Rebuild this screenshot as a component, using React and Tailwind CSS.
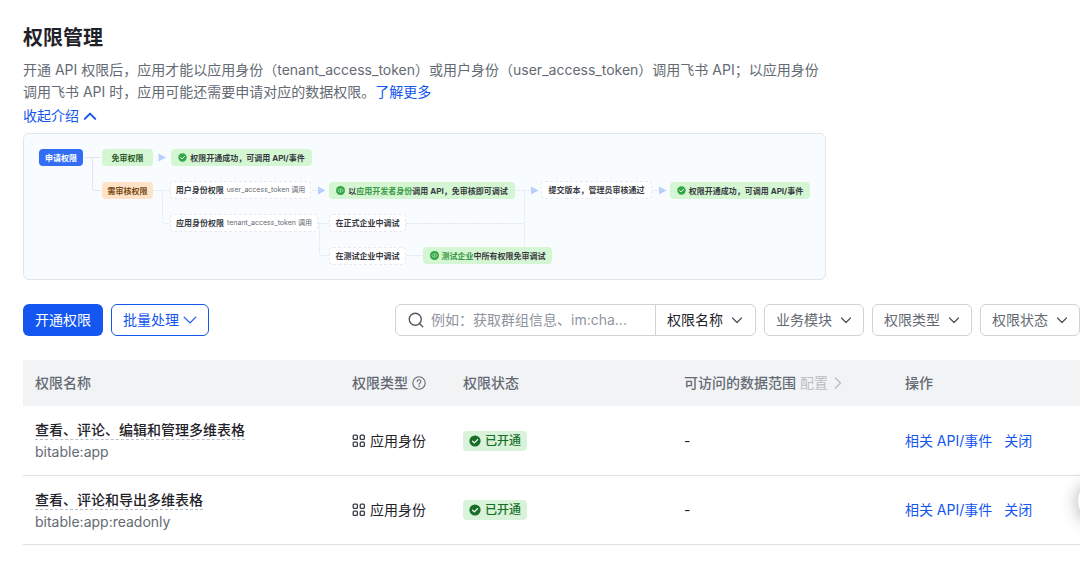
import React, { useState } from 'react';
import { Search } from 'lucide-react';

let permissions = [
  {
    scope: 'bitable:app',
    name: '查看、评论、编辑和管理多维表格',
    type: '应用身份',
    status: '已开通',
    range: '-',
  },
  {
    scope: 'bitable:app:readonly',
    name: '查看、评论和导出多维表格',
    type: '应用身份',
    status: '已开通',
    range: '-',
  },
];

let filters = ['业务模块', '权限类型', '权限状态'];

function Chevron({ className, d = 'M1.500 4L6 8.500L10.500 4', strokeWidth = 1.3 }) {
  return (
    <svg
      viewBox="0 0 12 12"
      className={className}
      fill="none"
      stroke="currentColor"
      strokeWidth={strokeWidth}
      strokeLinecap="round"
      strokeLinejoin="round"
      aria-hidden="true"
    >
      <path d={d} />
    </svg>
  );
}

function CheckIcon({ className }) {
  return (
    <svg viewBox="0 0 12 12" className={className} aria-hidden="true">
      <circle cx="6" cy="6" r="5.6" fill="currentColor" />
      <path
        d="M3.5 6.1L5.3 7.9L8.6 4.6"
        fill="none"
        stroke="#fff"
        strokeWidth={1.3}
        strokeLinecap="round"
        strokeLinejoin="round"
      />
    </svg>
  );
}

function CodeIcon({ className }) {
  return (
    <svg viewBox="0 0 12 12" className={className} aria-hidden="true">
      <circle cx="6" cy="6" r="6" fill="currentColor" />
      <path
        d="M4.2 4L2.6 6L4.2 8M7.8 4L9.4 6L7.8 8M6.4 3.6L5.6 8.4"
        fill="none"
        stroke="#d9f5d6"
        strokeWidth={0.9}
        strokeLinecap="round"
        strokeLinejoin="round"
      />
    </svg>
  );
}

function HelpIcon() {
  return (
    <svg
      viewBox="0 0 14 14"
      className="w-3.5 h-3.5"
      fill="none"
      stroke="currentColor"
      strokeWidth={1.1}
      strokeLinecap="round"
      aria-hidden="true"
    >
      <circle cx="7" cy="7" r="6.2" />
      <path d="M5.2 5.6a1.8 1.8 0 1 1 2.6 1.6c-.6.3-.8.6-.8 1.1" />
      <circle cx="7" cy="10.1" r="0.3" fill="currentColor" strokeWidth={0.7} />
    </svg>
  );
}

function AppsIcon() {
  return (
    <svg
      viewBox="0 0 14 14"
      className="w-3.5 h-3.5 text-[#373c43]"
      fill="none"
      stroke="currentColor"
      strokeWidth={1.3}
      aria-hidden="true"
    >
      <rect x="1.2" y="1.2" width="4.2" height="4.2" rx="1" />
      <rect x="8.2" y="1.2" width="4.2" height="4.2" rx="1" />
      <rect x="1.2" y="8.2" width="4.2" height="4.2" rx="1" />
      <rect x="8.2" y="8.2" width="4.2" height="4.2" rx="1" />
    </svg>
  );
}

function Node({ className, children }) {
  return (
    <div
      className={`absolute flex items-center justify-center whitespace-nowrap rounded-sm ${className}`}
    >
      {children}
    </div>
  );
}

function FlowLines() {
  return (
    <svg
      className="absolute left-0 top-0"
      width="800"
      height="145"
      fill="none"
      stroke="#e1e6f5"
      aria-hidden="true"
    >
      <path d="M60 23.5H77M68.5 23.5V54q0 2.500 2.500 2.500H77" />
      <path
        d="M129 56.500H146M138.500 56.500V87q0 2.500 2.500 2.500H146M288 56.500H294M294 89.500H305M295.500 89.500V119q0 2.500 2.500 2.500H305M382 89.500H500M382 121.500H399M500.500 56.500V113M491 56.500H507M628 56.500H635"
        strokeDasharray="2 1"
      />
      <g fill="#bacefd" stroke="none">
        <path d="M134.500 19.500L142 23.500L134.500 27.500Z" />
        <path d="M294 52.500L301.500 56.500L294 60.500Z" />
        <path d="M507 52.500L514.500 56.500L507 60.500Z" />
        <path d="M635 52.500L642.500 56.500L635 60.500Z" />
      </g>
    </svg>
  );
}

function FlowDiagram() {
  return (
    <div className="relative mt-1.5 h-[147px] max-w-[803px] rounded-md border border-[#e2e6ea] bg-[#f8fcff] overflow-hidden text-[8px] leading-3 font-bold text-[#373c43]">
      <FlowLines />
      <Node className="left-[15px] top-[15px] w-11 h-[17px] bg-[#336df4] text-white">
        申请权限
      </Node>
      <Node className="left-[78px] top-[15px] w-[51px] h-[17px] bg-[#d5f6d2] text-[#2b5a29]">
        免审权限
      </Node>
      <Node className="left-[147px] top-[15px] w-[141px] h-[17px] bg-[#d5f6d2] gap-[3px]">
        <CheckIcon className="w-[9px] h-[9px] text-[#32a645]" />
        <span>权限开通成功，可调用 API/事件</span>
      </Node>
      <Node className="left-[78px] top-[48px] w-[51px] h-[17px] bg-[#fee3c6] text-[#7a4a16]">
        需审核权限
      </Node>
      <Node className="left-[146px] top-[47px] w-[141px] h-[18px] border border-dashed border-[#e6e9f3] bg-white gap-[3px]">
        <span>用户身份权限</span>
        <span className="text-[7px] font-normal text-[#646a73]">
          user_access_token 调用
        </span>
      </Node>
      <Node className="left-[146px] top-[80px] w-[148px] h-[18px] border border-dashed border-[#e6e9f3] bg-white gap-[3px]">
        <span>应用身份权限</span>
        <span className="text-[7px] font-normal text-[#646a73]">
          tenant_access_token 调用
        </span>
      </Node>
      <Node className="left-[305px] top-[48px] w-[186px] h-[17px] bg-[#d5f6d2] gap-[3px]">
        <CodeIcon className="w-[9px] h-[9px] text-[#32a645]" />
        <span>
          以<span className="text-[#3a9a48]">应用开发者身份</span>调用
          API，免审核即可调试
        </span>
      </Node>
      <Node className="left-[305px] top-[80px] w-[77px] h-[18px] border border-dashed border-[#e6e9f3] bg-white">
        在正式企业中调试
      </Node>
      <Node className="left-[305px] top-[113px] w-[77px] h-[18px] border border-dashed border-[#e6e9f3] bg-white">
        在测试企业中调试
      </Node>
      <Node className="left-[399px] top-[113px] w-[129px] h-[17px] bg-[#d5f6d2] gap-[3px]">
        <CodeIcon className="w-[9px] h-[9px] text-[#32a645]" />
        <span>
          <span className="text-[#3a9a48]">测试企业</span>中所有权限免审调试
        </span>
      </Node>
      <Node className="left-[517px] top-[47px] w-[111px] h-[18px] border border-dashed border-[#e6e9f3] bg-white">
        提交版本，管理员审核通过
      </Node>
      <Node className="left-[646px] top-[48px] w-[140px] h-[17px] bg-[#d5f6d2] gap-[3px]">
        <CheckIcon className="w-[9px] h-[9px] text-[#32a645]" />
        <span>权限开通成功，可调用 API/事件</span>
      </Node>
    </div>
  );
}

function FilterSelect({ label }) {
  return (
    <div className="relative flex w-[100px] h-8 items-center">
      <select
        aria-label={label}
        className="w-full h-full appearance-none rounded-md border border-[#d0d3d6] bg-white pl-[11px] text-[#646a73]"
      >
        <option>{label}</option>
      </select>
      <Chevron className="absolute right-3 w-3 h-3 text-[#51565d] pointer-events-none" />
    </div>
  );
}

function Toolbar() {
  let [keyword, setKeyword] = useState('');

  return (
    <div className="flex items-center justify-between mt-6">
      <div className="flex flex-none items-center gap-2">
        <button className="h-8 px-3 rounded-md bg-[#1456f0] text-white">
          开通权限
        </button>
        <button className="flex items-center gap-1 h-8 px-[11px] rounded-md border border-[#1456f0] text-[#1456f0]">
          批量处理
          <Chevron
            className="w-3.5 h-3.5"
            d="M1 3.500L6 8.500L11 3.500"
            strokeWidth={1.1}
          />
        </button>
      </div>
      <div className="flex flex-none items-center gap-2">
        <div className="flex w-[361px] h-8 items-center rounded-md border border-[#d0d3d6] bg-white">
          <label className="flex flex-1 min-w-0 items-center gap-1.5 pl-[11px]">
            <Search
              className="flex-none w-[18px] h-[18px] text-[#51565d]"
              strokeWidth={1.8}
            />
            <input
              type="text"
              aria-label="搜索权限"
              placeholder="例如：获取群组信息、im:cha..."
              value={keyword}
              onChange={(e) => setKeyword(e.target.value)}
              className="w-full min-w-0 bg-transparent outline-none text-[#1f2329] placeholder:text-[#8f959e]"
            />
          </label>
          <div className="relative flex w-[100px] h-full items-center border-l border-[#d0d3d6]">
            <select
              aria-label="搜索字段"
              className="w-full h-full appearance-none bg-transparent pl-[11px] text-[#1f2329]"
            >
              <option>权限名称</option>
            </select>
            <Chevron className="absolute right-3 w-3 h-3 text-[#51565d] pointer-events-none" />
          </div>
        </div>
        {filters.map((label) => (
          <FilterSelect key={label} label={label} />
        ))}
      </div>
    </div>
  );
}

function PermissionsTable() {
  return (
    <table className="w-full mt-6 table-fixed text-left">
      <thead>
        <tr className="h-[46px] bg-[#f2f3f5] text-[#646a73]">
          <th className="w-[30%] px-3 font-medium">权限名称</th>
          <th className="w-[10.5%] px-3 font-medium whitespace-nowrap">
            <span className="flex items-center gap-1">
              权限类型
              <HelpIcon />
            </span>
          </th>
          <th className="w-[20.9%] px-3 font-medium">权限状态</th>
          <th className="w-[20.9%] px-3 font-medium whitespace-nowrap">
            <span className="flex items-center gap-1">
              可访问的数据范围
              <button
                disabled
                className="flex items-center gap-1 font-normal text-[#bbbfc4]"
              >
                配置
                <Chevron
                  className="w-3 h-3"
                  d="M3.500 1L8.500 6L3.500 11"
                  strokeWidth={1.5}
                />
              </button>
            </span>
          </th>
          <th className="px-3 font-medium">操作</th>
        </tr>
      </thead>
      <tbody>
        {permissions.map(({ scope, name, type, status, range }) => (
          <tr key={scope} className="h-[69px] border-b border-[#dee0e3]">
            <td className="px-3 pt-1">
              <div className="flex flex-col items-start">
                <span className="leading-[18px] font-medium text-[#1f2329] border-b border-dashed border-[#bbbfc4]">
                  {name}
                </span>
                <span className="mt-px leading-[22px] text-[#646a73]">
                  {scope}
                </span>
              </div>
            </td>
            <td className="px-3 pt-px">
              <span className="flex items-center gap-1 whitespace-nowrap">
                <AppsIcon />
                {type}
              </span>
            </td>
            <td className="px-3 pt-px">
              <span className="flex w-fit items-center gap-1 h-5 px-1.5 rounded bg-[#d9f3db] text-xs font-medium text-[#186e26]">
                <CheckIcon className="w-3 h-3" />
                {status}
              </span>
            </td>
            <td className="px-3 pt-px">{range}</td>
            <td className="px-3 pt-px">
              <div className="flex gap-3 whitespace-nowrap text-[#1456f0]">
                <a href="#events">相关 API/事件</a>
                <a href="#close">关闭</a>
              </div>
            </td>
          </tr>
        ))}
      </tbody>
    </table>
  );
}

export default function App() {
  let [open, setOpen] = useState(true);

  return (
    <div className="relative min-h-screen overflow-hidden bg-white pl-[23px] pt-6 pb-6 font-['Inter','Noto_Sans_CJK_SC',sans-serif] text-sm leading-[22px] text-[#1f2329]">
      <h1 className="text-xl leading-7 font-bold">权限管理</h1>
      <p className="mt-[7px] max-w-[803px] text-[#646a73]">
        开通 API
        权限后，应用才能以应用身份（tenant_access_token）或用户身份（user_access_token）调用飞书
        API；以应用身份调用飞书 API 时，应用可能还需要申请对应的数据权限。
        <a href="#more" className="text-[#1456f0]">
          了解更多
        </a>
      </p>
      <button
        className="flex items-center gap-1 mt-0.5 text-[#1456f0]"
        onClick={() => setOpen(!open)}
      >
        收起介绍
        <Chevron
          className="w-3.5 h-3.5"
          d="M1.500 8.500L6 4L10.500 8.500"
          strokeWidth={1.7}
        />
      </button>

      {open && <FlowDiagram />}

      <Toolbar />
      <PermissionsTable />

      <button
        aria-label="帮助"
        className="absolute -right-[38px] top-[481px] w-10 h-10 rounded-full bg-white shadow-[0_2px_16px_2px_rgba(31,35,41,0.3)]"
      />
    </div>
  );
}
